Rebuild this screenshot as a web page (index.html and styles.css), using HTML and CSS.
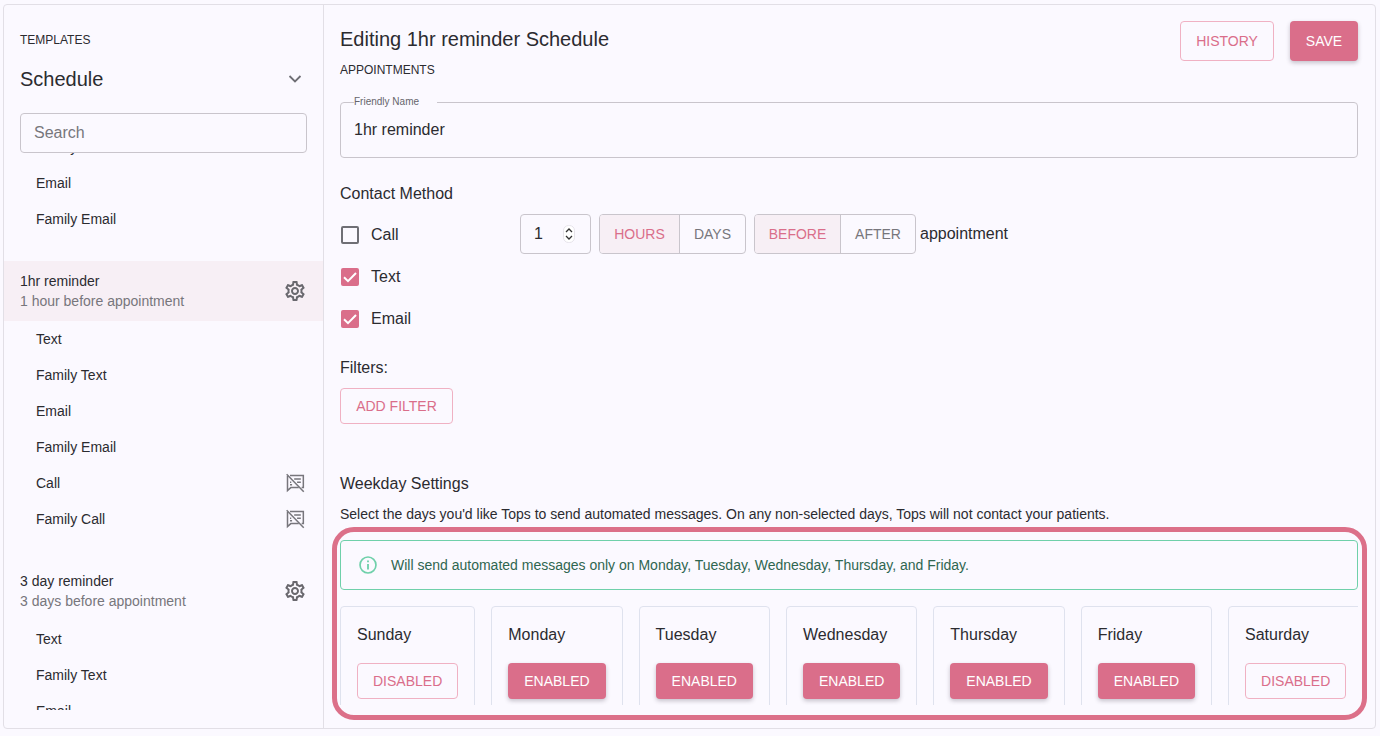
FILE: index.html
```html
<!DOCTYPE html>
<html lang="en">
<head>
  <meta charset="UTF-8" />
  <meta name="viewport" content="width=device-width, initial-scale=1" />
  <title>Editing 1hr reminder Schedule</title>
  <link rel="stylesheet" href="styles.css">
</head>
<body>
  <svg class="icon-defs" width="0" height="0" aria-hidden="true">
    <symbol id="gear" viewBox="0 0 24 24">
      <path d="M19.43 12.98c.04-.32.07-.64.07-.98 0-.34-.03-.66-.07-.98l2.11-1.65c.19-.15.24-.42.12-.64l-2-3.46c-.09-.16-.26-.25-.44-.25-.06 0-.12.01-.17.03l-2.49 1c-.52-.4-1.08-.73-1.69-.98l-.38-2.65C14.46 2.18 14.25 2 14 2h-4c-.25 0-.46.18-.49.42l-.38 2.65c-.61.25-1.17.59-1.69.98l-2.49-1c-.06-.02-.12-.03-.18-.03-.17 0-.34.09-.43.25l-2 3.46c-.13.22-.07.49.12.64l2.11 1.65c-.04.32-.07.65-.07.98 0 .33.03.66.07.98l-2.11 1.65c-.19.15-.24.42-.12.64l2 3.46c.09.16.26.25.44.25.06 0 .12-.01.17-.03l2.49-1c.52.4 1.08.73 1.69.98l.38 2.65c.03.24.24.42.49.42h4c.25 0 .46-.18.49-.42l.38-2.65c.61-.25 1.17-.59 1.69-.98l2.49 1c.06.02.12.03.18.03.17 0 .34-.09.43-.25l2-3.46c.12-.22.07-.49-.12-.64l-2.11-1.65zm-1.98-1.71c.04.31.05.52.05.73 0 .21-.02.43-.05.73l-.14 1.13.89.7 1.08.84-.7 1.21-1.27-.51-1.04-.42-.9.68c-.43.32-.84.56-1.25.73l-1.06.43-.16 1.13-.2 1.35h-1.4l-.19-1.35-.16-1.13-1.06-.43c-.43-.18-.83-.41-1.23-.71l-.91-.7-1.06.43-1.27.51-.7-1.21 1.08-.84.89-.7-.14-1.13c-.03-.31-.05-.54-.05-.74s.02-.43.05-.73l.14-1.13-.89-.7-1.08-.84.7-1.21 1.27.51 1.04.42.9-.68c.43-.32.84-.56 1.25-.73l1.06-.43.16-1.13.2-1.35h1.39l.19 1.35.16 1.13 1.06.43c.43.18.83.41 1.23.71l.91.7 1.06-.43 1.27-.51.7 1.21-1.07.85-.89.7.14 1.13zM12 8c-2.21 0-4 1.79-4 4s1.79 4 4 4 4-1.79 4-4-1.79-4-4-4zm0 6c-1.1 0-2-.9-2-2s.9-2 2-2 2 .9 2 2-.9 2-2 2z" />
    </symbol>
    <symbol id="notes-off" viewBox="0 0 24 24">
      <g fill="none" stroke="currentColor" stroke-width="1.8">
        <path d="M6 3h16v14.500h-2" />
        <path d="M3 3.500v17.500l4-3.500h9.500" />
        <path d="M2 1.500l20.500 21" />
        <path d="M11 7.300h8M14.500 11h4.500M6 11h1.500M6 14h2.500" />
      </g>
    </symbol>
  </svg>

  <div class="app">
    <aside class="sidebar">
      <div class="sidebar-head">
        <div class="overline">TEMPLATES</div>
        <div class="picker">
          <span>Schedule</span>
          <svg class="chevron" viewBox="0 0 24 24" width="24" height="24"><path d="M6.500 9l5.500 5.500L17.500 9" fill="none" stroke="currentColor" stroke-width="1.800" /></svg>
        </div>
        <input class="search" type="text" placeholder="Search" />
      </div>

      <div class="list">
        <div class="list-inner">
          <div class="row">Family Text</div>
          <div class="row">Email</div>
          <div class="row">Family Email</div>

          <div class="group group-active">
            <div>
              <div class="group-name">1hr reminder</div>
              <div class="group-sub">1 hour before appointment</div>
            </div>
            <svg class="gear"><use href="#gear" /></svg>
          </div>
          <div class="row">Text</div>
          <div class="row">Family Text</div>
          <div class="row">Email</div>
          <div class="row">Family Email</div>
          <div class="row">Call <svg class="off"><use href="#notes-off" /></svg></div>
          <div class="row">Family Call <svg class="off"><use href="#notes-off" /></svg></div>

          <div class="group">
            <div>
              <div class="group-name">3 day reminder</div>
              <div class="group-sub">3 days before appointment</div>
            </div>
            <svg class="gear"><use href="#gear" /></svg>
          </div>
          <div class="row">Text</div>
          <div class="row">Family Text</div>
          <div class="row">Email</div>
        </div>
      </div>
    </aside>

    <main class="main">
      <div class="main-head">
        <div>
          <h1>Editing 1hr reminder Schedule</h1>
          <div class="overline">APPOINTMENTS</div>
        </div>
        <div class="actions">
          <button class="btn btn-outline btn-history">HISTORY</button>
          <button class="btn btn-solid btn-save">SAVE</button>
        </div>
      </div>

      <fieldset class="field">
        <legend>Friendly Name</legend>
        <div class="field-value">1hr reminder</div>
      </fieldset>

      <h2 class="contact-title">Contact Method</h2>
      <div class="contact">
        <div class="methods">
          <label class="method"><span class="check"></span>Call</label>
          <label class="method"><span class="check checked"><svg viewBox="0 0 18 18" width="18" height="18"><path d="M3 9.200l4 4L15 5" fill="none" stroke="#fff" stroke-width="2" /></svg></span>Text</label>
          <label class="method"><span class="check checked"><svg viewBox="0 0 18 18" width="18" height="18"><path d="M3 9.200l4 4L15 5" fill="none" stroke="#fff" stroke-width="2" /></svg></span>Email</label>
        </div>
        <div class="timing">
          <div class="number">
            <span>1</span>
            <svg class="spinner" viewBox="0 0 12 18" width="12" height="18">
              <rect x="0.500" y="0.500" width="11" height="17" rx="5" fill="#fff" stroke="#e6e3ea" />
              <path d="M3 7L6 4 9 7M3 11L6 14 9 11" fill="none" stroke="#333" stroke-width="1.300" />
            </svg>
          </div>
          <div class="toggle">
            <span class="toggle-item on toggle-hours">HOURS</span>
            <span class="toggle-item toggle-days">DAYS</span>
          </div>
          <div class="toggle">
            <span class="toggle-item on toggle-before">BEFORE</span>
            <span class="toggle-item toggle-after">AFTER</span>
          </div>
          <span class="timing-tail">appointment</span>
        </div>
      </div>

      <div class="filters-title">Filters:</div>
      <button class="btn btn-outline btn-filter">ADD FILTER</button>

      <h2 class="weekday-title">Weekday Settings</h2>
      <p class="weekday-note">Select the days you'd like Tops to send automated messages. On any non-selected days, Tops will not contact your patients.</p>

      <section class="weekdays">
        <div class="alert">
          <svg viewBox="0 0 24 24" width="22" height="22"><circle cx="12" cy="12" r="8.700" fill="none" stroke="#6fd0aa" stroke-width="1.800" /><path d="M12 11v6M12 7v2" fill="none" stroke="#6fd0aa" stroke-width="2" /></svg>
          <span>Will send automated messages only on Monday, Tuesday, Wednesday, Thursday, and Friday.</span>
        </div>
        <div class="days">
          <div class="day"><div class="day-name">Sunday</div><button class="btn btn-outline">DISABLED</button></div>
          <div class="day"><div class="day-name">Monday</div><button class="btn btn-solid">ENABLED</button></div>
          <div class="day"><div class="day-name">Tuesday</div><button class="btn btn-solid">ENABLED</button></div>
          <div class="day"><div class="day-name">Wednesday</div><button class="btn btn-solid">ENABLED</button></div>
          <div class="day"><div class="day-name">Thursday</div><button class="btn btn-solid">ENABLED</button></div>
          <div class="day"><div class="day-name">Friday</div><button class="btn btn-solid">ENABLED</button></div>
          <div class="day"><div class="day-name">Saturday</div><button class="btn btn-outline">DISABLED</button></div>
        </div>
        <div class="highlight"></div>
      </section>
    </main>
  </div>
</body>
</html>
```

FILE: styles.css
```css
:root {
  --rosa: #da6e8a;
  --rosa-claro: #f0b1c3;
  --rosa-fundo: #f7eff5;
  --fundo: #fbf9ff;
  --linha: #e2dfe6;
  --linha-campo: #c9c5cc;
  --texto: #2b2b30;
  --cinza: #77767c;
}

* {
  box-sizing: border-box;
  margin: 0;
  padding: 0;
}

body {
  font-family: "Liberation Sans", Arial, sans-serif;
  background: var(--fundo);
  color: var(--texto);
  padding: 4px 4px 7px 3px;
  height: 736px;
  overflow: hidden;
}

.icon-defs {
  position: absolute;
}

.app {
  display: flex;
  height: 725px;
  border: 1px solid var(--linha);
  border-radius: 4px;
  overflow: hidden;
}

.overline {
  font-size: 12px;
  line-height: 16px;
}

/* Sidebar */
.sidebar {
  width: 320px;
  flex-shrink: 0;
  border-right: 1px solid var(--linha);
  display: flex;
  flex-direction: column;
}

.sidebar-head {
  padding: 27px 16px 0;
}

.picker {
  display: flex;
  justify-content: space-between;
  align-items: center;
  font-size: 20px;
  line-height: 24px;
  margin-top: 19px;
}

.chevron {
  color: #6f6f75;
}

.search {
  display: block;
  width: 287px;
  height: 40px;
  margin-top: 22px;
  padding: 0 13px;
  border: 1px solid var(--linha-campo);
  border-radius: 4px;
  background: transparent;
  font-family: inherit;
  font-size: 16px;
  color: var(--texto);
  outline: none;
}

.search::placeholder {
  color: var(--cinza);
  opacity: 1;
}

.list {
  height: 557px;
  overflow: hidden;
}

.list-inner {
  margin-top: -24px;
}

.row {
  height: 36px;
  display: flex;
  align-items: center;
  justify-content: space-between;
  padding: 0 18px 0 32px;
  font-size: 14px;
}

.off {
  width: 20px;
  height: 20px;
  color: #77767c;
}

.group {
  height: 60px;
  margin-top: 24px;
  display: flex;
  align-items: center;
  justify-content: space-between;
  padding: 0 16px;
  font-size: 14px;
  line-height: 20px;
}

.group-active {
  background: var(--rosa-fundo);
}

.group-sub {
  color: var(--cinza);
}

.gear {
  width: 24px;
  height: 24px;
  fill: #69686e;
}

/* Conteudo */
.main {
  flex: 1;
  min-width: 0;
  padding: 16px 17px 0 16px;
}

.main-head {
  display: flex;
  justify-content: space-between;
  align-items: flex-start;
  height: 81px;
}

h1 {
  font-size: 20px;
  font-weight: 400;
  line-height: 24px;
  margin: 6px 0 11px;
}

.actions {
  display: flex;
  gap: 16px;
}

.btn {
  font-family: inherit;
  font-size: 14px;
  line-height: 20px;
  border-radius: 4px;
  padding: 0 16px;
  height: 36px;
  cursor: pointer;
  white-space: nowrap;
}

.btn-outline {
  background: transparent;
  color: var(--rosa);
  border: 1px solid var(--rosa-claro);
  padding: 0 15px;
}

.btn-solid {
  background: var(--rosa);
  color: #fff;
  border: none;
  box-shadow: 0 2px 4px rgba(60, 50, 70, 0.28);
}

.btn-history,
.btn-save {
  height: 40px;
  padding: 0;
}

.btn-history {
  width: 94px;
}

.btn-save {
  width: 68px;
}

.field {
  height: 62px;
  margin-top: -6px;
  padding: 0 13px;
  border: 1px solid var(--linha-campo);
  border-radius: 4px;
}

.field legend {
  font-size: 10px;
  line-height: 12px;
  color: #66656b;
  padding: 0 18px 0 0;
}

.field-value {
  font-size: 16px;
  line-height: 20px;
  margin-top: 12px;
}

h2 {
  font-size: 16px;
  font-weight: 400;
  line-height: 20px;
}

.contact-title {
  margin-top: 26px;
}

.contact {
  display: flex;
  align-items: flex-start;
}

.methods {
  width: 180px;
  padding: 10px 0 0 1px;
}

.method {
  display: flex;
  align-items: center;
  gap: 12px;
  height: 42px;
  font-size: 16px;
}

.check {
  width: 18px;
  height: 18px;
  border: 2px solid #6f6f75;
  border-radius: 2px;
  display: block;
}

.check.checked {
  border: none;
  background: var(--rosa);
}

.check svg {
  display: block;
}

.timing {
  display: flex;
  align-items: center;
  gap: 8px;
  height: 40px;
  margin-top: 10px;
}

.number {
  width: 71px;
  height: 40px;
  border: 1px solid var(--linha-campo);
  border-radius: 4px;
  display: flex;
  align-items: center;
  justify-content: space-between;
  padding: 0 15px 0 13px;
  font-size: 16px;
}

.toggle {
  display: flex;
  height: 40px;
  border: 1px solid var(--linha-campo);
  border-radius: 4px;
  overflow: hidden;
}

.toggle-item {
  display: flex;
  align-items: center;
  justify-content: center;
  font-size: 14px;
  color: var(--cinza);
}

.toggle-item.on {
  background: var(--rosa-fundo);
  color: var(--rosa);
  border-right: 1px solid var(--linha-campo);
}

.toggle-hours { width: 80px; }
.toggle-days { width: 65px; }
.toggle-before { width: 86px; }
.toggle-after { width: 74px; }

.timing-tail {
  font-size: 16px;
  margin-left: -4px;
}

.filters-title {
  font-size: 16px;
  line-height: 20px;
  margin-top: 18px;
}

.btn-filter {
  display: block;
  width: 113px;
  padding: 0;
  margin-top: 10px;
}

.weekday-title {
  margin-top: 50px;
}

.weekday-note {
  font-size: 14px;
  line-height: 20px;
  margin-top: 10px;
}

.weekdays {
  position: relative;
  margin-top: 16px;
}

.alert {
  height: 50px;
  border: 1px solid #6fd0aa;
  border-radius: 4px;
  display: flex;
  align-items: center;
  gap: 12px;
  padding: 0 16px;
  font-size: 14px;
  color: #2f6650;
}

.days {
  display: flex;
  gap: 16px;
  height: 99px;
  margin-top: 16px;
  overflow: hidden;
}

.day {
  flex-shrink: 0;
  height: 130px;
  padding: 17px 16px 16px;
  border: 1px solid #dfe2ee;
  border-radius: 4px;
}

.day-name {
  font-size: 16px;
  line-height: 22px;
  margin-bottom: 17px;
}

/* moldura de destaque sobre a area dos dias */
.highlight {
  position: absolute;
  inset: -13px -9px -15px -8px;
  border: 5px solid #dc7089;
  border-radius: 22px;
  pointer-events: none;
}
```
